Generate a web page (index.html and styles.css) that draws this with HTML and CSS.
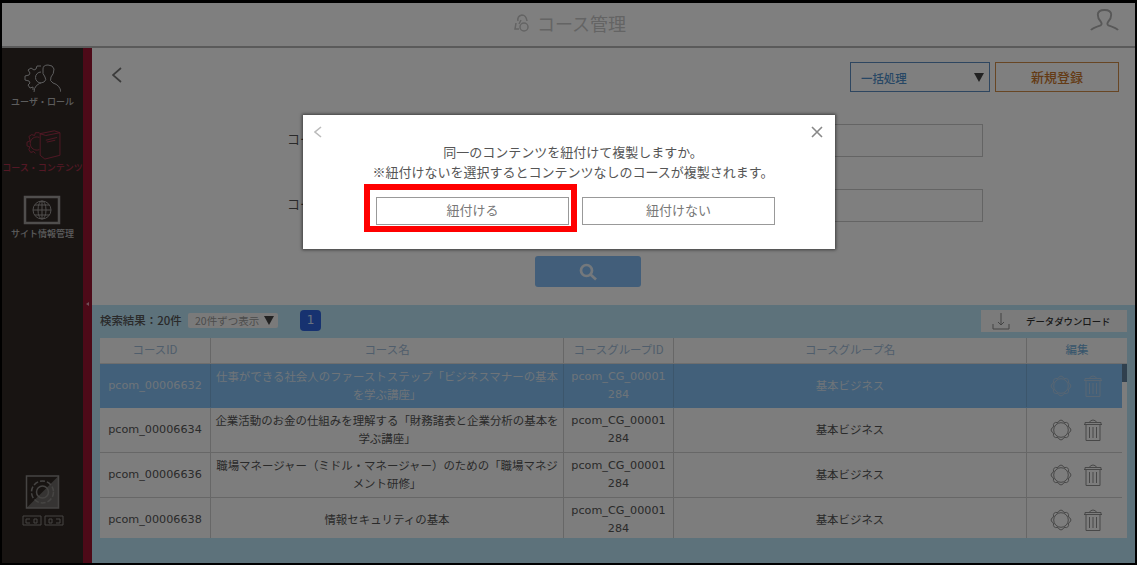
FILE: index.html
```html
<!DOCTYPE html>
<html lang="ja">
<head>
  <meta charset="UTF-8">
  <title>コース管理</title>
  <link rel="stylesheet" href="styles.css">
</head>
<body>
<svg class="defs">
  <symbol id="gear" viewBox="0 0 24 24">
    <path d="M20 9.500A2.600 2.600 0 0 1 20 14.500L19.400 16A2.600 2.600 0 0 1 16 19.400L14.500 20A2.600 2.600 0 0 1 9.500 20L8 19.400A2.600 2.600 0 0 1 4.600 16L4 14.500A2.600 2.600 0 0 1 4 9.500L4.600 8A2.600 2.600 0 0 1 8 4.600L9.500 4A2.600 2.600 0 0 1 14.500 4L16 4.600A2.600 2.600 0 0 1 19.400 8Z"/>
    <circle cx="12" cy="12" r="7.300"/>
  </symbol>
  <symbol id="trash" viewBox="0 0 20 24">
    <path d="M1 6.500h18M2 6.500V4.500h16v2M6 4.500Q10-0.500 14 4.500M3 6.500V22.500H17V6.500M6.500 9v11M10 9v11M13.500 9v11"/>
  </symbol>
</svg>

<div class="frame">
  <header class="header">
    <h1 class="title">
      <svg class="title-icon" viewBox="0 0 18 20"><path d="M5 8Q4 3 9 2q4 0 5 6M3 10l-1 6h4M8 7l-2 4"/><circle cx="11" cy="14" r="4"/></svg>
      コース管理
    </h1>
    <svg class="user-icon" viewBox="0 0 30 24"><path d="M1 22Q2 20 11 17Q13 16 11 13Q8 10 8 6Q8 1 15 1t7 5Q22 10 19 13Q17 16 19 17Q28 20 29 22"/></svg>
  </header>

  <div class="body">
    <nav class="sidebar">
      <a class="menu">
        <svg viewBox="0 0 38 32"><path d="M18 21a5.500 5.500 0 1 1 0-11M10 28v-3l-3 1-2-3 2-2-1-2-4-1v-4l4-1 1-2-2-3 3-2 3 2 2-1 1-3h4M11 30q0-8 10-10 3-2 1-5-3-3-2-8 0-4 5-4t6 4q0 5-3 8-2 4 2 6 7 2 8 9"/></svg>
        <span>ユーザ・ロール</span>
      </a>
      <a class="menu active">
        <svg viewBox="0 0 38 34"><path d="M15 23a7 7 0 1 1 0-13M11 27l-2-2-3 1-2-3 1-3-3-1v-4l3-1 0-2-1-3 3-2 3 1 1-3h4l2 2M16 6v23l5 4 16-4V5l-6-2-15 3 6 2 15-3M22 13l12-3M23 15l9-2"/></svg>
        <span>コース・コンテンツ</span>
      </a>
      <a class="menu">
        <svg viewBox="0 0 38 30"><path stroke-width="2.500" d="M2 2h34v26H2z"/><circle cx="19" cy="15" r="9"/><ellipse cx="19" cy="15" rx="4" ry="9"/><path d="M10 15h18M12 10h14M12 20h14M19 6v18"/></svg>
        <span>サイト情報管理</span>
      </a>
      <div class="mode">
        <svg class="mode-icon" viewBox="0 0 34 34"><path class="fill" d="M33 1v32H1z"/><path d="M1 1h32v32H1z"/><circle cx="17" cy="17" r="11" stroke-dasharray="5 2"/><circle cx="17" cy="17" r="6"/></svg>
        <svg class="mode-switch" viewBox="0 0 42 11"><path d="M1 1h18v9H1zM23 1h18v9H23zM8 4H4v4h4M12 4h3v4h-3zM27 4h3v4h-3zM34 4h4v4h-4"/></svg>
      </div>
    </nav>
    <div class="handle"><i></i></div>

    <main class="main">
      <section class="search">
        <div class="toolbar">
          <svg class="back" viewBox="0 0 10 16"><path d="M9 1L1 8l8 7"/></svg>
          <div class="batch">一括処理 <i class="arrow"></i></div>
          <button class="create">新規登録</button>
        </div>
        <div class="field"><label>コースID</label><input type="text"></div>
        <div class="field"><label>コース名</label><input type="text"></div>
        <button class="search-btn">
          <svg viewBox="0 0 18 18"><circle cx="7.500" cy="7.500" r="5.500"/><path d="M11.500 11.500L17 16.500"/></svg>
        </button>
      </section>

      <section class="result">
        <div class="result-bar">
          <span class="count">検索結果：20件</span>
          <div class="per-page">20件ずつ表示 <i class="arrow"></i></div>
          <span class="page">1</span>
          <button class="download">
            <svg viewBox="0 0 18 18"><path d="M9 1v12M6 10l3 3 3-3M1 12v5h16v-5"/></svg>
            データダウンロード
          </button>
        </div>
        <div class="table">
          <div class="row head">
            <div>コースID</div><div>コース名</div><div>コースグループID</div><div>コースグループ名</div><div>編集</div>
          </div>
          <div class="list">
            <div class="row selected">
              <div class="code">pcom_00006632</div>
              <div>仕事ができる社会人のファーストステップ「ビジネスマナーの基本<br>を学ぶ講座」</div>
              <div class="code">pcom_CG_00001<br>284</div>
              <div>基本ビジネス</div>
              <div class="edit"><svg><use href="#gear"/></svg><svg class="trash"><use href="#trash"/></svg></div>
            </div>
            <div class="row">
              <div class="code">pcom_00006634</div>
              <div>企業活動のお金の仕組みを理解する「財務諸表と企業分析の基本を<br>学ぶ講座」</div>
              <div class="code">pcom_CG_00001<br>284</div>
              <div>基本ビジネス</div>
              <div class="edit"><svg><use href="#gear"/></svg><svg class="trash"><use href="#trash"/></svg></div>
            </div>
            <div class="row">
              <div class="code">pcom_00006636</div>
              <div>職場マネージャー（ミドル・マネージャー）のための「職場マネジ<br>メント研修」</div>
              <div class="code">pcom_CG_00001<br>284</div>
              <div>基本ビジネス</div>
              <div class="edit"><svg><use href="#gear"/></svg><svg class="trash"><use href="#trash"/></svg></div>
            </div>
            <div class="row">
              <div class="code">pcom_00006638</div>
              <div>情報セキュリティの基本</div>
              <div class="code">pcom_CG_00001<br>284</div>
              <div>基本ビジネス</div>
              <div class="edit"><svg><use href="#gear"/></svg><svg class="trash"><use href="#trash"/></svg></div>
            </div>
            <i class="scrollbar"></i>
          </div>
        </div>
      </section>
    </main>
  </div>

  <div class="overlay"></div>
  <div class="modal">
    <div class="modal-top">
      <svg class="modal-back" viewBox="0 0 8 12"><path d="M7 1L1 6l6 5"/></svg>
      <svg class="modal-close" viewBox="0 0 12 12"><path d="M1 1l10 10M11 1L1 11"/></svg>
    </div>
    <p>同一のコンテンツを紐付けて複製しますか。<br>※紐付けないを選択するとコンテンツなしのコースが複製されます。</p>
    <div class="modal-buttons">
      <button class="marked">紐付ける</button>
      <button>紐付けない</button>
    </div>
  </div>
</div>
</body>
</html>
```
FILE: styles.css
```css
*, *::after { box-sizing: border-box; }
body { margin: 0; background: #fff; font-family: "Noto Sans CJK JP", sans-serif; font-size: 11.45px; color: #555; overflow: hidden; }
button { font-family: inherit; padding: 0; }
svg { fill: none; stroke: currentColor; flex: none; display: block; }
.defs { position: absolute; width: 0; height: 0; }
.frame { position: relative; width: 1137px; height: 565px; border: 2px solid #000; border-top-width: 3px; display: flex; flex-direction: column; }

.header { height: 45px; flex: none; display: flex; align-items: center; justify-content: center; border-bottom: 2px solid #b4b4b4; position: relative; }
.title { margin: -3px 0 0 2px; display: flex; align-items: center; gap: 6px; font-size: 18px; font-weight: 400; color: #c8c8c8; }
.title-icon { width: 18px; height: 20px; stroke-width: 1.5; }
.user-icon { position: absolute; right: 16px; top: 6px; width: 29px; height: 23px; color: #b0b0b0; stroke-width: 2; }

.body { flex: 1; display: flex; min-height: 0; }
.sidebar { width: 81px; background: #302825; color: #bbb; display: flex; flex-direction: column; align-items: center; padding-top: 13px; }
.menu { display: flex; flex-direction: column; align-items: center; height: 66px; font-size: 9px; font-weight: 500; line-height: 14px; white-space: nowrap; }
.menu svg { width: 38px; height: 34px; padding: 1px 0; }
.menu.active { color: #a8304a; }
.menu:nth-child(3) svg { color: #a09c9a; }
.mode { margin-top: auto; margin-bottom: 37px; color: #8c8986; display: flex; flex-direction: column; align-items: center; gap: 6px; }
.mode-icon { width: 35px; height: 34px; stroke-width: 1.5; }
.mode-icon .fill { fill: #6c6966; stroke: none; }
.mode-switch { width: 42px; height: 11px; }
.handle { width: 9px; background: #9a1430; }
.handle i { display: block; margin: 254px 0 0 3px; width: 0; border: 2px solid transparent; border-right: 3px solid #e0a0b0; border-left: 0; }

.main { flex: 1; display: flex; flex-direction: column; min-width: 0; }
.search { height: 257px; display: flex; flex-direction: column; padding-top: 14px; }
.toolbar { display: flex; height: 30px; padding-right: 16px; gap: 5px; }
.back { width: 10px; height: 16px; margin: 5px auto 0 20px; color: #777; stroke-width: 1.7; }
.batch { width: 140px; border: 1px solid #5c8dc0; display: flex; align-items: center; justify-content: space-between; padding: 1px 5px 0 10px; color: #4e8fca; font-weight: 500; }
.arrow { width: 0; border: 5px solid transparent; border-top: 9px solid #444; border-bottom: 0; }
.create { width: 124px; border: 1px solid #d08c48; background: none; color: #c9772c; font-size: 13px; font-weight: 500; padding-bottom: 2px; }
.field { display: flex; align-items: center; height: 33px; margin: 32px 0 0 195px; font-size: 13px; }
.toolbar + .field { margin-top: 32px; }
.field label { width: 110px; padding-bottom: 4px; }
.field input { width: 586px; height: 33px; border: 1px solid #c8c8c8; background: none; }
.search-btn { width: 106px; height: 31px; margin: 34px auto 0 443px; border: 0; border-radius: 3px; background: #84bdf5; color: #e8f0f8; display: flex; align-items: center; justify-content: center; flex: none; }
.search-btn svg { width: 18px; height: 18px; stroke-width: 2.7; }

.result { flex: 1; background: #bae4f7; padding: 0 8px; }
.result-bar { display: flex; align-items: center; height: 33px; }
.count { width: 88px; margin-top: -3px; white-space: nowrap; font-weight: 500; }
.per-page { width: 90px; height: 15px; background: #f5f5f5; border-radius: 2px; color: #999; font-size: 10.5px; display: flex; align-items: center; justify-content: space-between; padding: 0 4px 0 7px; margin-top: -3px; white-space: nowrap; }
.page { margin: -2px auto 0 22px; width: 21px; height: 21px; border-radius: 4px; background: #2f64e0; color: #d4e4ff; font: 12px/21px "DejaVu Sans", sans-serif; text-align: center; }
.download { width: 146px; height: 22px; margin-top: -1px; border: 0; background: #f6f6f6; display: flex; align-items: center; gap: 16px; padding-left: 11px; color: #333; font-size: 9.4px; font-weight: 500; white-space: nowrap; }
.download svg { width: 18px; height: 18px; color: #888; stroke-width: 1; }

.table { width: 1027px; background: #fafafa; }
.row { display: grid; grid-template-columns: 111px 353px 110px 353px 95px; width: 1022px; height: 45px; line-height: 17.6px; border-bottom: 1px solid #cecece; }
.row > div { display: flex; align-items: center; justify-content: center; text-align: center; white-space: nowrap; border-right: 1px solid #cecece; }
.row > div:last-child { border-right: 0; }
.head { height: 26px; width: 1027px; grid-template-columns: 111px 353px 110px 353px 100px; color: #a0bcd8; border-bottom-color: #ddd; }
.head > div { padding-bottom: 2px; }
.head > div:last-child { color: #6cabd8; }
.row .code { font-family: "DejaVu Sans", sans-serif; font-size: 11.2px; }
.list { position: relative; height: 174px; overflow: hidden; }
.list .row:last-of-type { height: 44px; border-bottom: 0; }
.list .selected { background: #84c0f5; color: #dce8f2; height: 44px; border-color: #84c0f5; }
.list .selected > div { border-color: #79acd9; }
.row .edit { gap: 10px; color: #909090; padding-left: 2px; }
.edit svg { width: 24px; height: 24px; }
.edit svg.trash { width: 20px; height: 24px; }
.list .selected .edit { color: #b0cce6; }
.scrollbar { position: absolute; right: 0; top: 0; width: 5px; height: 18px; background: #60809c; }

.overlay { position: absolute; inset: 0; background: rgba(0, 0, 0, .5); }
.modal { position: absolute; left: 301px; top: 112px; width: 532px; height: 134px; background: #fff; box-shadow: 0 0 3px 1px rgba(0, 0, 0, .5); color: #555; }
.modal-top { display: flex; justify-content: space-between; height: 27px; padding: 11px 12px 0 11px; }
.modal-back { width: 8px; height: 12px; color: #bbb; stroke-width: 1.6; }
.modal-close { width: 12px; height: 12px; color: #888; stroke-width: 1.6; }
.modal p { margin: 0 0 0 8px; font-size: 13px; line-height: 20px; text-align: center; white-space: nowrap; }
.modal-buttons { display: flex; gap: 13px; margin: 15px 0 0 73px; }
.modal-buttons button { width: 193px; height: 28px; background: #fff; border: 1px solid #999; font-size: 13px; color: #777; padding-bottom: 3px; }
.modal-buttons .marked { position: relative; }
.marked::after { content: ""; position: absolute; left: -13px; top: -14px; width: 213px; height: 48px; border: 6px solid #f00; }
```
